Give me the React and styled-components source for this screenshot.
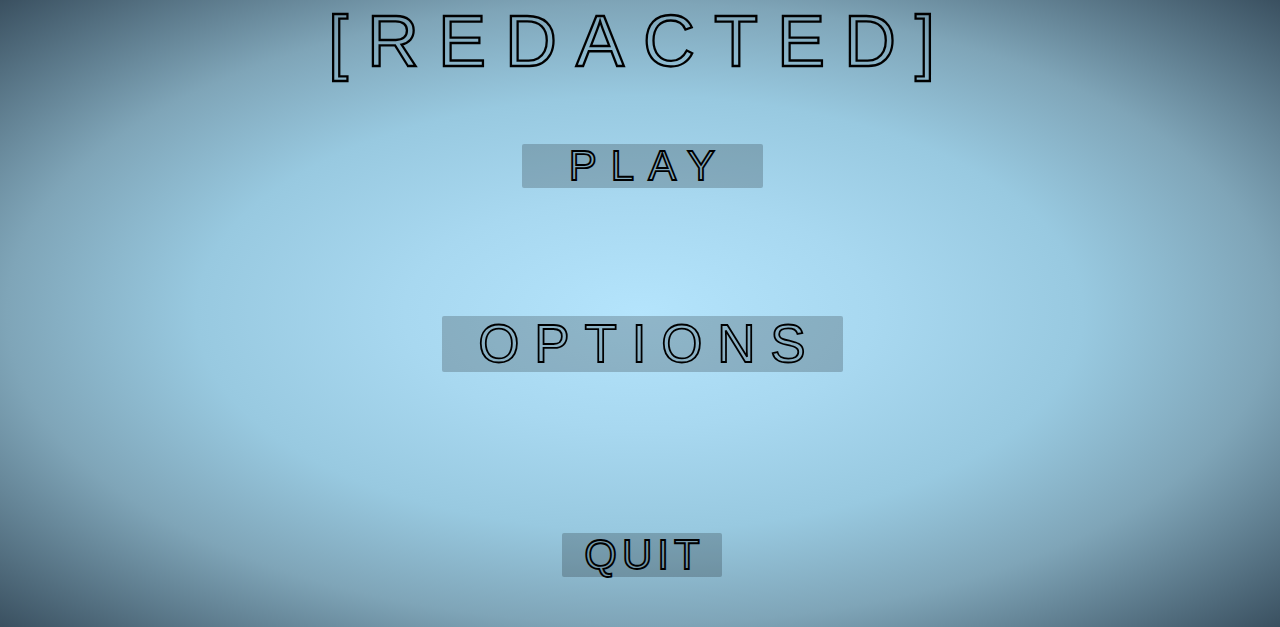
import React from "react";
import styled, { createGlobalStyle } from "styled-components";

const GlobalStyle = createGlobalStyle`
  html, body {
    margin: 0;
    padding: 0;
    height: 100%;
  }
  body {
    font-family: "Liberation Sans", Arial, sans-serif;
    overflow: hidden;
  }
`;

const Screen = styled.main`
  width: 100vw;
  height: 100vh;
  box-sizing: border-box;
  padding-top: 5px;
  display: flex;
  flex-direction: column;
  align-items: center;
  background: radial-gradient(
    ellipse farthest-corner at 50% 50%,
    #b4e4fc 0%,
    #a8d8f0 26%,
    #98c9e0 49%,
    #7fa5b8 70%,
    #3a5060 100%
  );
`;

const Title = styled.h1`
  margin: 0 -2px 0 0;
  font-size: 72px;
  line-height: 72px;
  font-weight: 400;
  letter-spacing: 19px;
  color: transparent;
  -webkit-text-stroke: 2.3px #000;
  white-space: nowrap;
`;

const Menu = styled.nav`
  display: flex;
  flex-direction: column;
  align-items: center;
  padding-left: 4px;
`;

const MenuButton = styled.button`
  box-sizing: border-box;
  width: ${(p) => p.$w}px;
  height: ${(p) => p.$h}px;
  margin-top: ${(p) => p.$top}px;
  padding: 0;
  border: none;
  border-radius: 2px;
  background: rgba(0, 0, 0, 0.2);
  display: flex;
  align-items: center;
  justify-content: center;
  cursor: pointer;
  font-family: inherit;
`;

const Label = styled.span`
  display: block;
  font-size: ${(p) => p.$size}px;
  line-height: ${(p) => p.$h}px;
  font-weight: 400;
  letter-spacing: ${(p) => p.$ls}px;
  margin-right: -${(p) => p.$ls}px;
  color: transparent;
  -webkit-text-stroke: 1.8px #000;
  white-space: nowrap;
`;

const items = [
  { text: "PLAY", w: 241, h: 44, top: 67, size: 42, ls: 14 },
  { text: "OPTIONS", w: 401, h: 56, top: 128, size: 53, ls: 14.8 },
  { text: "QUIT", w: 160, h: 44, top: 161, size: 42, ls: 5 },
];

export default function App() {
  return (
    <>
      <GlobalStyle />
      <Screen>
        <Title>[REDACTED]</Title>
        <Menu>
          {items.map((it) => (
            <MenuButton key={it.text} $w={it.w} $h={it.h} $top={it.top}>
              <Label $size={it.size} $h={it.h} $ls={it.ls}>
                {it.text}
              </Label>
            </MenuButton>
          ))}
        </Menu>
      </Screen>
    </>
  );
}
